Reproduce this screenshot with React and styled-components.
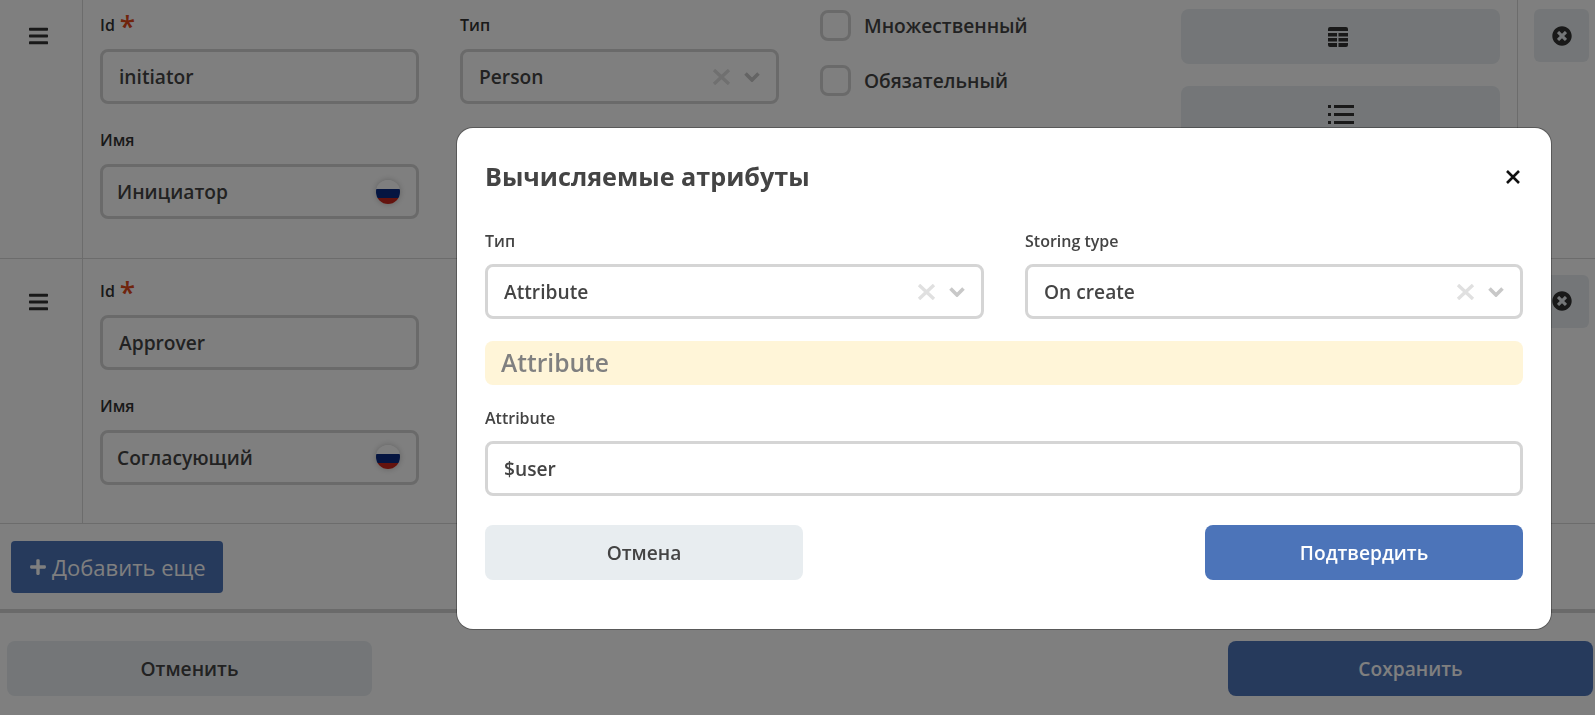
import React from 'react';
import styled, {createGlobalStyle} from 'styled-components';
import {FaBars, FaTimesCircle, FaPlus} from 'react-icons/fa';

const Global = createGlobalStyle`
  html, body {
    margin: 0;
    height: 100%;
    overflow: hidden;
    background: #fff;
    font-family: "Open Sans", "Liberation Sans", sans-serif;
    color: #333;
  }
  * { box-sizing: border-box; }
`

const Page = styled.div`
  margin-top: -7px;
  width: 1595px;
`
const Row = styled.div`
  display: flex;
  height: 265.5px;
  border-bottom: 1px solid #d8d8d8;
`
const Handle = styled.div`
  flex: 0 0 83px;
  border-right: 1px solid #d8d8d8;
  padding: 32px 0 0 29px;
  font-size: 19px;
  color: #333;
  svg { display: block; width: 19px; height: 22px; }
`
const Fields = styled.div`
  display: grid;
  grid-template-columns: 319px 319px;
  column-gap: 41px;
  padding-left: 17px;
  align-content: start;
  width: 737px;
`
const Field = styled.div`
  display: flex;
  flex-direction: column;
  height: 115px;
  padding-top: 21px;
`
const Label = styled.label`
  font-size: 16px;
  font-weight: 600;
  line-height: 22px;
  height: 35px;
  display: block;
  padding-top: ${p => p.$dark ? 1 : 0}px;
  color: ${p => p.$dark ? '#444' : '#333'};
  em {
    font-style: normal;
    color: #e0491b;
    font-size: 28px;
    line-height: 20px;
    margin-left: 5px;
    font-weight: 600;
    vertical-align: -6px;
  }
`
const Box = styled.div`
  display: flex;
  align-items: center;
  height: 55px;
  border: 3px solid #d5d5d5;
  border-radius: 8px;
  background: #fff;
  padding: 0 16px 0 ${p => p.$tight ? 14 : 16}px;
  font-size: 19.2px;
  font-weight: 600;
  color: #444;
`
const BoxText = styled.span`
  flex: 1;
`
const ClearIcon = styled.svg`
  width: 19px;
  height: 16px;
  margin-right: 13px;
  stroke: #e0e0e0;
  stroke-width: 3.4;
  fill: none;
`
const Chevron = styled.svg`
  width: 16px;
  height: 10px;
  stroke: #c8c8c8;
  stroke-width: 3.6;
  fill: none;
`
const Flag = styled.span`
  flex: 0 0 24px;
  height: 24px;
  border-radius: 50%;
  box-shadow: 0 0 6px rgba(0,0,0,.25);
  background: linear-gradient(#fff 0 36%, #0a2a82 36% 73%, #c8261c 73%);
`
const Flags = styled.div`
  flex: 0 0 361px;
  padding-top: 17px;
  display: flex;
  flex-direction: column;
  gap: 24px;
`
const Check = styled.label`
  display: flex;
  align-items: center;
  gap: 13px;
  font-size: 19.2px;
  font-weight: 600;
  color: #444;
  span {
    width: 31px;
    height: 31px;
    border: 3px solid #d5d5d5;
    border-radius: 8px;
  }
`
const Actions = styled.div`
  flex: 0 0 337px;
  padding-top: 16px;
  display: flex;
  flex-direction: column;
  gap: 22px;
  border-right: 1px solid #d8d8d8;
  padding-right: 17px;
`
const IconButton = styled.div`
  height: 55px;
  border-radius: 8px;
  background: #e8edf0;
  display: flex;
  align-items: center;
  justify-content: center;
  svg { fill: #333; }
`
const TableSvg = styled.svg`
  margin: 1px 6px 0 0;
`
const Remove = styled.div`
  flex: 0 0 55px;
  height: 53px;
  margin: 16px 0 0 16px;
  border-radius: 6px;
  background: #e8edf0;
  display: flex;
  align-items: center;
  justify-content: center;
  font-size: 20px;
  color: #333;
`
const AddBar = styled.div`
  height: 89px;
  padding: 17px 11px;
  border-bottom: 4px solid #d5d5d5;
`
const AddButton = styled.button`
  display: flex;
  align-items: center;
  gap: 5px;
  height: 52px;
  width: 212px;
  border: 0;
  border-radius: 4px;
  background: #4c74b9;
  color: #fff;
  font: 400 22px "Open Sans", sans-serif;
  padding: 0 0 0 18px;
  svg { width: 18px; height: 18px; }
`
const Footer = styled.div`
  display: flex;
  justify-content: space-between;
  padding: 28px 2px 0 7px;
`
const Button = styled.button`
  width: ${p => p.$w}px;
  height: 55px;
  border: 0;
  border-radius: 8px;
  background: ${p => p.$primary ? '#4c74b9' : '#e8edf0'};
  color: ${p => p.$primary ? '#fff' : '#444'};
  font: 600 19.2px "Open Sans", sans-serif;
`
const Overlay = styled.div`
  position: fixed;
  inset: 0;
  background: rgba(0,0,0,.5);
  padding: 128px 0 0 457px;
`
const Modal = styled.div`
  width: 1094px;
  height: 501px;
  background: #fff;
  border-radius: 16px;
  box-shadow: 0 0 0 1px rgba(0,0,0,.3);
  padding: 28px 28px 0;
`
const ModalHead = styled.div`
  display: flex;
  align-items: center;
  justify-content: space-between;
  height: 40px;
  margin-bottom: 33px;
  h2 {
    margin: -1px 0 0;
    font-size: 25.2px;
    font-weight: 700;
    color: #444;
  }
  svg { width: 14px; height: 14px; stroke: #111; stroke-width: 2.6; margin: 2px 3px 0 0; }
`
const Two = styled.div`
  display: grid;
  grid-template-columns: 499px 498px;
  column-gap: 41px;
`
const Notice = styled.div`
  height: 44px;
  margin: 22px 0 21px;
  border-radius: 8px;
  background: #fff5d8;
  color: #808080;
  padding-left: 16px;
  font-size: 24.6px;
  font-weight: 600;
  line-height: 44px;
`
const ModalFoot = styled.div`
  display: flex;
  justify-content: space-between;
  margin-top: 29px;
`

const Clear = () => (
  <ClearIcon viewBox="0 0 19 16"><path d="M2 1l15 14M17 1L2 15"/></ClearIcon>
)
const Down = () => (
  <Chevron viewBox="0 0 16 10"><path d="M1.500 1.500L8 8l6.500-6.500"/></Chevron>
)
const TableIcon = () => (
  <TableSvg width="20" height="20" viewBox="0 0 20 20">
    <path d="M2 0h16a2 2 0 0 1 2 2v2H0V2a2 2 0 0 1 2-2z"/>
    <rect y="6" width="9" height="3.500"/><rect x="10.500" y="6" width="9.500" height="3.500"/>
    <rect y="11" width="9" height="3.500"/><rect x="10.500" y="11" width="9.500" height="3.500"/>
    <path d="M0 16h9v4H2a2 2 0 0 1-2-2zM10.500 16H20v2a2 2 0 0 1-2 2h-7.500z"/>
  </TableSvg>
)
const ListIcon = () => (
  <svg width="26" height="20" viewBox="0 0 26 20">
    <rect y="1" width="3" height="3"/><rect x="6" y="1" width="20" height="3"/>
    <rect y="9" width="3" height="3"/><rect x="6" y="9" width="20" height="3"/>
    <rect y="17" width="3" height="3"/><rect x="6" y="17" width="20" height="3"/>
  </svg>
)

const Select = ({value}) => (
  <Box><BoxText>{value}</BoxText><Clear/><Down/></Box>
)

const Attr = ({id, name}) => (
  <Row>
    <Handle><FaBars/></Handle>
    <Fields>
      <Field>
        <Label>Id<em>*</em></Label>
        <Box>{id}</Box>
      </Field>
      <Field>
        <Label>Тип</Label>
        <Select value="Person"/>
      </Field>
      <Field>
        <Label>Имя</Label>
        <Box $tight><BoxText>{name}</BoxText><Flag/></Box>
      </Field>
    </Fields>
    <Flags>
      <Check><span/>Множественный</Check>
      <Check><span/>Обязательный</Check>
    </Flags>
    <Actions>
      <IconButton><TableIcon/></IconButton>
      <IconButton><ListIcon/></IconButton>
    </Actions>
    <Remove><FaTimesCircle/></Remove>
  </Row>
)

export default function App() {
  return (
    <>
      <Global/>
      <Page>
        <Attr id="initiator" name="Инициатор"/>
        <Attr id="Approver" name="Согласующий"/>
        <AddBar><AddButton><FaPlus/>Добавить еще</AddButton></AddBar>
        <Footer>
          <Button $w={365}>Отменить</Button>
          <Button $w={365} $primary>Сохранить</Button>
        </Footer>
      </Page>
      <Overlay>
        <Modal>
          <ModalHead>
            <h2>Вычисляемые атрибуты</h2>
            <svg viewBox="0 0 14 14"><path d="M1 1l12 12M13 1L1 13"/></svg>
          </ModalHead>
          <Two>
            <div><Label $dark>Тип</Label><Select value="Attribute"/></div>
            <div><Label $dark>Storing type</Label><Select value="On create"/></div>
          </Two>
          <Notice>Attribute</Notice>
          <Label $dark>Attribute</Label>
          <Box>$user</Box>
          <ModalFoot>
            <Button $w={318}>Отмена</Button>
            <Button $w={318} $primary>Подтвердить</Button>
          </ModalFoot>
        </Modal>
      </Overlay>
    </>
  );
}
